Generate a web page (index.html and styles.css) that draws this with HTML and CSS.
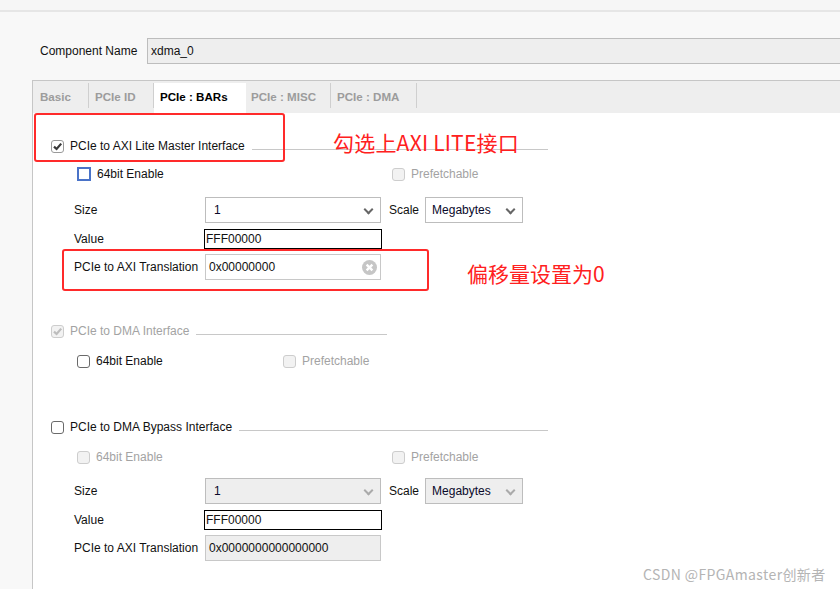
FILE: index.html
```html
<!DOCTYPE html>
<html lang="en">
<head>
    <meta charset="UTF-8">
    <title>XDMA - PCIe : BARs</title>
    <link rel="stylesheet" href="styles.css">
</head>
<body>
<div class="screen">
    <div class="topbar"></div>

    <!-- 组件名 -->
    <div class="name-row">
        <span class="name-label">Component Name</span>
        <div class="name-input">xdma_0</div>
    </div>

    <!-- 标签页 -->
    <div class="tab-panel">
        <div class="tab-bar">
            <div class="tab t-basic">Basic</div>
            <div class="tab t-id">PCIe ID</div>
            <div class="tab t-bars active">PCIe : BARs</div>
            <div class="tab t-misc">PCIe : MISC</div>
            <div class="tab t-dma">PCIe : DMA</div>
        </div>

        <div class="pane">
            <!-- PCIe to AXI Lite Master -->
            <div class="group-head g1">
                <span class="box checked"><svg viewBox="0 0 11 11"><path d="M2 5.6 L4.6 8 L9.2 2.6"/></svg></span>
                <span class="group-title">PCIe to AXI Lite Master Interface</span>
                <span class="group-line"></span>
            </div>
            <div class="check-row r-lite">
                <div class="check-col">
                    <span class="box focus"></span>
                    <span>64bit Enable</span>
                </div>
                <div class="check-item disabled">
                    <span class="box off"></span>
                    <span>Prefetchable</span>
                </div>
            </div>
            <div class="form-row r-size1">
                <span class="label">Size</span>
                <div class="combo">1<span class="chev"></span></div>
                <span class="scale-label">Scale</span>
                <div class="combo small">Megabytes<span class="chev"></span></div>
            </div>
            <div class="form-row r-value">
                <span class="label">Value</span>
                <div class="value-box">FFF00000</div>
            </div>
            <div class="form-row r-trans">
                <span class="label">PCIe to AXI Translation</span>
                <div class="text-box">0x00000000<span class="clear"><svg viewBox="0 0 14 14"><circle cx="7" cy="7" r="7"/><path d="M4.3 4.3 L9.7 9.7 M9.7 4.3 L4.3 9.7"/></svg></span></div>
            </div>

            <!-- PCIe to DMA -->
            <div class="group-head g2 disabled">
                <span class="box checked off"><svg viewBox="0 0 11 11"><path d="M2 5.6 L4.6 8 L9.2 2.6"/></svg></span>
                <span class="group-title">PCIe to DMA Interface</span>
                <span class="group-line"></span>
            </div>
            <div class="check-row r-dma">
                <div class="check-col narrow">
                    <span class="box"></span>
                    <span>64bit Enable</span>
                </div>
                <div class="check-item disabled">
                    <span class="box off"></span>
                    <span>Prefetchable</span>
                </div>
            </div>

            <!-- PCIe to DMA Bypass -->
            <div class="group-head g3">
                <span class="box"></span>
                <span class="group-title">PCIe to DMA Bypass Interface</span>
                <span class="group-line"></span>
            </div>
            <div class="check-row r-bypass">
                <div class="check-col disabled">
                    <span class="box off"></span>
                    <span>64bit Enable</span>
                </div>
                <div class="check-item disabled">
                    <span class="box off"></span>
                    <span>Prefetchable</span>
                </div>
            </div>
            <div class="form-row r-size2">
                <span class="label">Size</span>
                <div class="combo grey">1<span class="chev light"></span></div>
                <span class="scale-label">Scale</span>
                <div class="combo small grey">Megabytes<span class="chev light"></span></div>
            </div>
            <div class="form-row r-value">
                <span class="label">Value</span>
                <div class="value-box">FFF00000</div>
            </div>
            <div class="form-row r-trans">
                <span class="label">PCIe to AXI Translation</span>
                <div class="text-box grey">0x0000000000000000</div>
            </div>
        </div>
    </div>

    <!-- 标注 -->
    <div class="mark mark-1"></div>
    <div class="mark mark-2"></div>
    <div class="note note-1">勾选上AXI LITE接口</div>
    <div class="note note-2">偏移量设置为0</div>
    <div class="watermark">CSDN @FPGAmaster创新者</div>
</div>
</body>
</html>
```

FILE: styles.css
```css
* {
    margin: 0;
    padding: 0;
    box-sizing: border-box;
}
body {
    font-family: "Liberation Sans", Arial, sans-serif;
    font-size: 12px;
    color: #111;
    background: #f8f8f8;
}
.screen {
    position: relative;        /*标注相对它定位*/
    width: 840px;
    height: 589px;
    overflow: hidden;
}
.topbar {
    height: 12px;
    background: #f6f6f6;
    border-bottom: 2px solid #e6e6e6;
}

/* 组件名 */
.name-row {
    display: flex;
    align-items: center;
    height: 26px;
    margin-top: 26px;
    padding-left: 40px;
}
.name-label {
    width: 107px;
}
.name-input {
    flex: 1;
    height: 26px;
    line-height: 24px;
    padding-left: 3px;
    margin-right: -4px;
    background: #eeeeee;
    border: 1px solid #bdbdbd;
}

/* 标签页 */
.tab-panel {
    margin: 16px 0 0 32px;
    border-top: 1px solid #c6c6c6;
    border-left: 1px solid #c6c6c6;
    height: 520px;
}
.tab-bar {
    display: flex;
    height: 32px;
    background: #eeeeee;
    padding-top: 2px;
}
.tab {
    padding-left: 7px;
    line-height: 28px;
    font-size: 11.6px;
    font-weight: bold;
    color: #9c9c9c;
    border-right: 1px solid #cfcfcf;
    margin-bottom: 5px;
    white-space: nowrap;
}
.t-basic { width: 56px; }
.t-id    { width: 65px; padding-left: 6px; }
.t-bars  { width: 92px; padding-left: 6px; }
.t-misc  { width: 85px; padding-left: 5px; }
.t-dma   { width: 86px; padding-left: 6px; }
.tab.active {
    background: #fff;
    color: #000;
    margin-bottom: 0;
    padding-bottom: 2px;
    border-right: none;
}
.pane {
    background: #fff;
    height: 100%;
    padding: 23px 0 0 18px;
}

/* 复选框 */
.box {
    display: inline-block;
    width: 13px;
    height: 13px;
    border: 1px solid #6a6a6a;
    border-radius: 3px;
    background: #fff;
    flex: none;
}
.box svg {
    display: block;
    width: 11px;
    height: 11px;
}
.box svg path {
    fill: none;
    stroke: #3a3a3a;
    stroke-width: 2.2;
}
.box.checked {
    border-color: #9a9a9a;
}
.box.off {
    border-color: #cdcdcd;
    background: #f2f2f2;
}
.box.off svg path {
    stroke: #bdbdbd;
}
.box.focus {
    width: 14px;
    height: 14px;
    border: 2px solid #4a73c8;
    border-radius: 0;
}
.disabled {
    color: #a3a3a3;
}

.group-head {
    display: flex;
    align-items: center;
    height: 20px;
    gap: 6px;
}
.group-line {
    flex: 1;
    height: 1px;
    background: #c8c8c8;
    margin: 6px 0 0 1px;
}
.g1 { width: 497px; }
.g2 { width: 336px; margin-top: 41px; }
.g3 { width: 497px; margin-top: 46px; }

.check-row {
    display: flex;
    align-items: center;
    height: 20px;
    margin-top: 8px;
    padding-left: 26px;
}
.check-col, .check-item {
    display: flex;
    align-items: center;
    gap: 6px;
}
.check-col {
    width: 315px;
}
.check-col.narrow {
    width: 206px;
}
.r-dma, .r-bypass { margin-top: 10px; }

/* 表单行 */
.form-row {
    display: flex;
    align-items: center;
    padding-left: 23px;
}
.label {
    width: 131px;
    flex: none;
}
.combo {
    position: relative;
    width: 176px;
    height: 26px;
    line-height: 24px;
    padding-left: 8px;
    border: 1px solid #bdbdbd;
    background: #fff;
    color: #0a0a2a;
}
.combo.small {
    width: 98px;
    margin-left: 6px;
    padding-left: 6px;
}
.combo.grey, .text-box.grey {
    background: #eeeeee;
}
.chev {
    position: absolute;
    right: 8px;
    top: 8px;
    width: 7px;
    height: 7px;
    border-right: 2px solid #666;
    border-bottom: 2px solid #666;
    transform: rotate(45deg);
}
.chev.light {
    border-color: #aaa;
}
.scale-label {
    margin-left: 8px;
}
.r-size1 { height: 26px; margin-top: 13px; }
.r-size2 { height: 26px; margin-top: 11px; }
.r-value { height: 20px; margin-top: 6px; }
.r-trans { height: 26px; margin-top: 5px; }
.value-box {
    width: 178px;
    height: 20px;
    margin-left: -1px;
    line-height: 18px;
    padding-left: 1px;
    border: 1px solid #000;
    background: #fff;
}
.text-box {
    position: relative;
    width: 176px;
    height: 26px;
    line-height: 24px;
    padding-left: 3px;
    border: 1px solid #c8c8c8;
    background: #fff;
}
.clear {
    position: absolute;
    right: 3px;
    top: 5px;
    width: 15px;
    height: 15px;
}
.clear svg {
    display: block;
    width: 15px;
    height: 15px;
}
.clear circle { fill: #c6c6c6; }
.clear path { stroke: #fff; stroke-width: 2.2; }

/* 红色标注 */
.mark {
    position: absolute;
    border: 2.5px solid #ff2a2a;
    border-radius: 3px;
}
.mark-1 { left: 34px; top: 113px; width: 251px; height: 49px; }
.mark-2 { left: 62px; top: 249px; width: 367px; height: 42px; }
.note {
    position: absolute;
    font-family: "Noto Sans CJK SC", sans-serif;
    font-size: 21px;
    line-height: 1;
    color: #ff2020;
}
.note-1 { left: 333px; top: 132px; letter-spacing: 0.2px; }
.note-2 { left: 467px; top: 263px; }
.watermark {
    position: absolute;
    left: 643px;
    top: 564px;
    font-family: "Noto Sans CJK SC", sans-serif;
    font-size: 14px;
    letter-spacing: 0.4px;
    color: #b4b4b4;
}
```
